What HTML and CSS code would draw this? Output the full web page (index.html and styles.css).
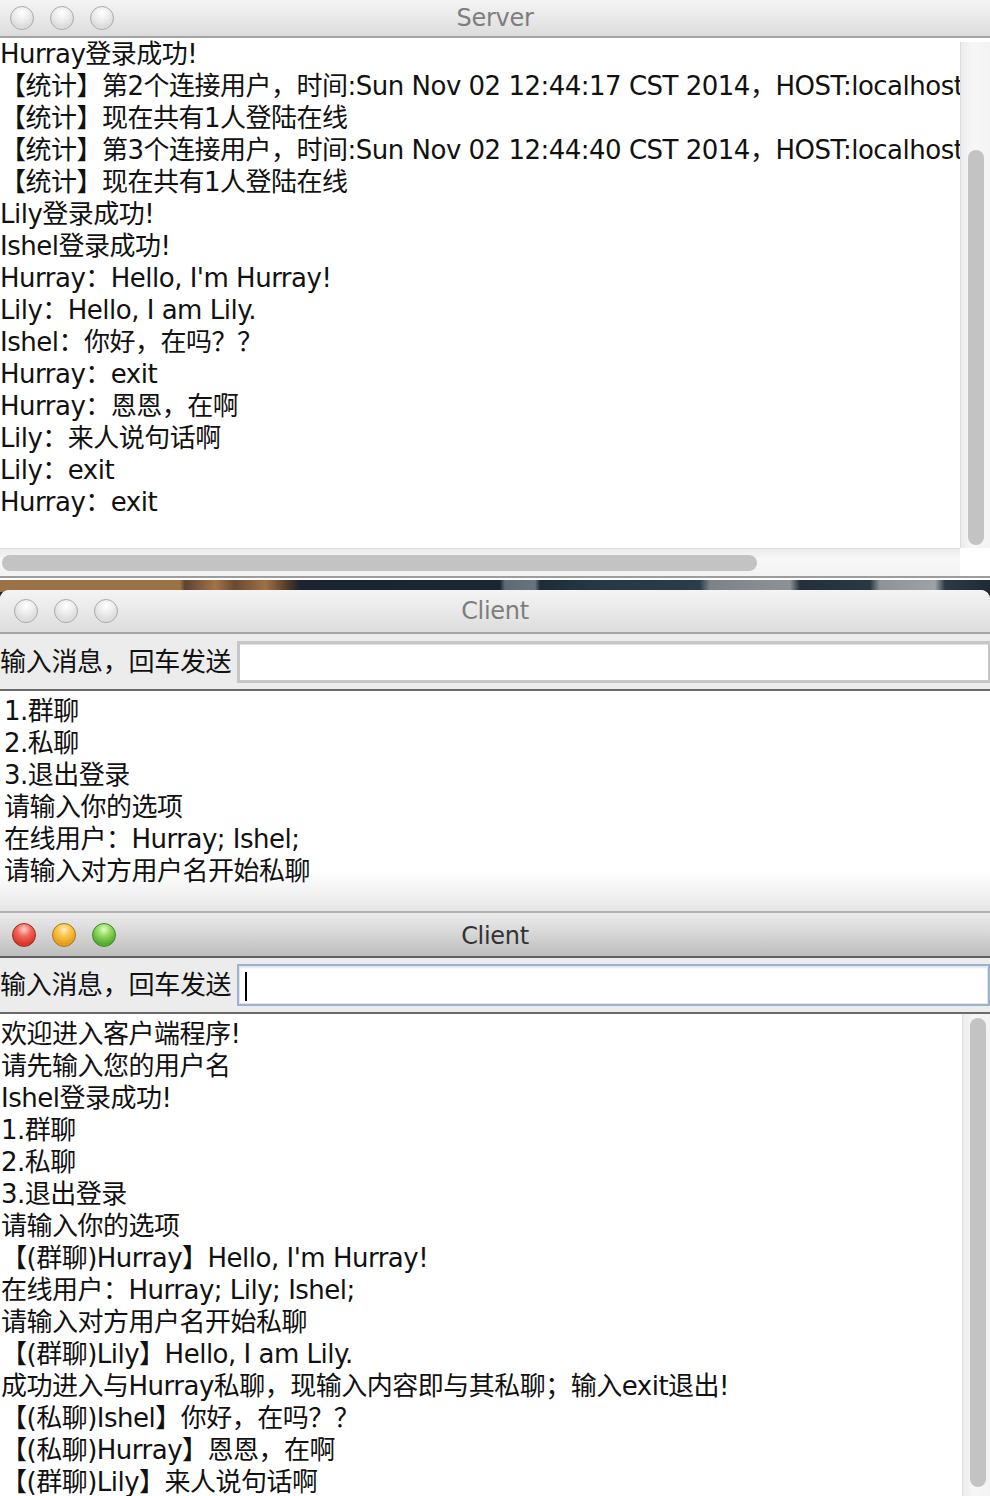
FILE: index.html
```html
<!DOCTYPE html>
<html>
<head>
<meta charset="utf-8">
<title>Server / Client</title>
<link rel="stylesheet" href="styles.css">
</head>
<body>
<div class="win win-server">
  <div class="titlebar inactive">
    <div class="lights lights-server">
      <span class="light"></span><span class="light"></span><span class="light"></span>
    </div>
    <div class="title">Server</div>
    <div></div>
  </div>
  <div class="server-main">
    <div class="log log-server">Hurray登录成功!
【统计】第2个连接用户，时间:Sun Nov 02 12:44:17 CST 2014，HOST:localhost
【统计】现在共有1人登陆在线
【统计】第3个连接用户，时间:Sun Nov 02 12:44:40 CST 2014，HOST:localhost
【统计】现在共有1人登陆在线
Lily登录成功!
Ishel登录成功!
Hurray：Hello, I'm Hurray!
Lily：Hello, I am Lily.
Ishel：你好，在吗？？
Hurray：exit
Hurray：恩恩，在啊
Lily：来人说句话啊
Lily：exit
Hurray：exit</div>
    <div class="vtrack vtrack-server"><div class="vthumb"></div></div>
  </div>
  <div class="hbar">
    <div class="htrack"><div class="hthumb"></div></div>
    <div class="corner"></div>
  </div>
</div>
<div class="desktop">
  <div class="win win-client1">
    <div class="titlebar inactive tall">
      <div class="lights lights-c1">
        <span class="light"></span><span class="light"></span><span class="light"></span>
      </div>
      <div class="title">Client</div>
      <div></div>
    </div>
    <div class="inputrow">
      <span class="label">输入消息，回车发送</span>
      <div class="field"></div>
    </div>
    <div class="log log-c1">1.群聊
2.私聊
3.退出登录
请输入你的选项
在线用户：Hurray; Ishel;
请输入对方用户名开始私聊</div>
  </div>
  <div class="win win-client2">
    <div class="titlebar active">
      <div class="lights lights-c2">
        <span class="light red"></span><span class="light yellow"></span><span class="light green"></span>
      </div>
      <div class="title">Client</div>
      <div></div>
    </div>
    <div class="inputrow inputrow-active">
      <span class="label">输入消息，回车发送</span>
      <div class="field focused"><span class="caret"></span></div>
    </div>
    <div class="client2-main">
      <div class="log log-c2">欢迎进入客户端程序!
请先输入您的用户名
Ishel登录成功!
1.群聊
2.私聊
3.退出登录
请输入你的选项
【(群聊)Hurray】Hello, I'm Hurray!
在线用户：Hurray; Lily; Ishel;
请输入对方用户名开始私聊
【(群聊)Lily】Hello, I am Lily.
成功进入与Hurray私聊，现输入内容即与其私聊；输入exit退出!
【(私聊)Ishel】你好，在吗？？
【(私聊)Hurray】恩恩，在啊
【(群聊)Lily】来人说句话啊</div>
      <div class="vtrack vtrack-c2"><div class="vthumb"></div></div>
    </div>
  </div>
</div>
</body>
</html>
```

FILE: styles.css
```css
html, body {
  margin: 0;
  padding: 0;
}
body {
  width: 990px;
  height: 1496px;
  overflow: hidden;
  background: #ffffff;
  font-family: "DejaVu Sans", "Noto Sans CJK SC", sans-serif;
  font-size: 26px;
  color: #111111;
}

/* ---------- window chrome ---------- */
.titlebar {
  display: grid;
  grid-template-columns: 1fr auto 1fr;
  align-items: center;
  box-sizing: border-box;
}
.titlebar.inactive {
  height: 38px;
  background: linear-gradient(#f4f4f4, #e9e9e9 50%, #dcdcdc);
  border-bottom: 2px solid #a4a4a4;
}
.titlebar.inactive.tall {
  height: 44px;
}
.titlebar.active {
  height: 46px;
  background: linear-gradient(#ececec, #dadada 40%, #bdbdbd);
  border-top: 1px solid #b2b2b2;
  border-bottom: 2px solid #5f5f5f;
}
.title {
  font-size: 24px;
  color: #7e7e7e;
  line-height: 1;
  letter-spacing: -0.3px;
}
.titlebar.active .title {
  color: #333333;
  padding-top: 3px;
}
.lights {
  display: flex;
  gap: 16px;
}
.lights-server { padding-left: 10px; }
.lights-c1 { padding-left: 14px; }
.lights-c2 { padding-left: 12px; }
.light {
  width: 24px;
  height: 24px;
  box-sizing: border-box;
  border-radius: 50%;
  border: 1px solid #a9a9a9;
  background: radial-gradient(circle at 50% 28%, #ffffff 0, #f1f1f1 30%, #dcdcdc 70%, #e9e9e9 100%);
}
.light.red {
  border-color: #9c2a22;
  background: radial-gradient(circle at 50% 25%, #ffd0c8 0, #f2675c 35%, #d8342a 75%, #f06a50 100%);
}
.light.yellow {
  border-color: #a8781a;
  background: radial-gradient(circle at 50% 25%, #fff0b8 0, #f9c44a 35%, #e59a18 75%, #f7c650 100%);
}
.light.green {
  border-color: #3e8a28;
  background: radial-gradient(circle at 50% 25%, #e0ffc8 0, #8fd85c 35%, #4eaa2e 75%, #9ade6a 100%);
}

/* ---------- text areas ---------- */
.log {
  white-space: pre;
  overflow: hidden;
  line-height: 32px;
  letter-spacing: -0.5px;
  background: #ffffff;
}

/* ---------- server ---------- */
.server-main {
  display: grid;
  grid-template-columns: 1fr 30px;
  height: 510px;
}
.log-server {
  padding-top: 0;
}
.vtrack {
  box-sizing: border-box;
  background: linear-gradient(to right, #ececec, #f7f7f7 40%, #f3f3f3);
  border-left: 1px solid #dddddd;
}
.vthumb {
  width: 16px;
  height: 100%;
  border-radius: 8px;
  background: #c3c3c3;
}
.vtrack-server {
  margin-top: 4px;
  padding: 108px 0 3px 7px;
}
.hbar {
  display: grid;
  grid-template-columns: 1fr 30px;
  height: 30px;
  box-sizing: border-box;
  border-bottom: 2px solid #9c9c9c;
}
.htrack {
  background: linear-gradient(#ececec, #f7f7f7 40%, #f3f3f3);
  border-top: 1px solid #dddddd;
  padding: 6px 0 0 2px;
}
.hthumb {
  width: 755px;
  height: 16px;
  border-radius: 8px;
  background: #c3c3c3;
}
.corner {
  background: #ffffff;
}
.win-server {
  margin-bottom: 2px;
}

/* ---------- desktop strip ---------- */
.desktop {
  padding-top: 10px;
  background:
    linear-gradient(to right,
      #9a7245 0, #9a7245 180px,
      #5c4232 185px, #a27448 215px, #6a4a34 235px, #a07044 265px, #4a3428 290px,
      #1b2430 300px, #1a2733 500px,
      #5f6a75 505px, #6a737d 535px,
      #1f2c38 540px, #263846 600px, #2b3d4b 700px,
      #7b8288 710px, #8d9296 790px,
      #24313d 800px, #2a3844 870px,
      #8e9398 880px, #9da2a6 935px,
      #2c3a46 945px, #1f2a35 990px) top / 100% 12px no-repeat,
    #1f2a35;
}

/* ---------- client windows ---------- */
.win-client1 {
  border-radius: 9px 9px 0 0;
  overflow: hidden;
  background: #ececec;
}
.inputrow {
  display: flex;
  align-items: center;
  height: 57px;
  box-sizing: border-box;
  background: #ececec;
  border-bottom: 2px solid #6b6b6b;
}
.label {
  white-space: nowrap;
  color: #111111;
  line-height: 1;
  letter-spacing: -0.3px;
}
.field {
  flex: 1;
  height: 42px;
  margin-left: 6px;
  box-sizing: border-box;
  background: #ffffff;
  border: 3px solid #c6c6c6;
  border-right-width: 2px;
  box-shadow: inset 0 1px 0 #e2e2e2;
  position: relative;
}
.field.focused {
  border: 2px solid #9cb3cd;
  box-shadow: inset 0 0 0 1px #dde6ef, inset 0 2px 2px #e8e8e8;
}
.caret {
  position: absolute;
  left: 6px;
  top: 6px;
  width: 2px;
  height: 29px;
  background: #000000;
}
.log-c1 {
  height: 221px;
  box-sizing: border-box;
  padding: 4px 0 0 4px;
  background: linear-gradient(#ffffff 0, #ffffff 180px, #eeeeee 208px, #e4e4e4 221px);
  border-bottom: 1px solid #b3b3b3;
}
.inputrow-active {
  height: 56px;
}
.client2-main {
  display: grid;
  grid-template-columns: 1fr 28px;
  height: 600px;
}
.log-c2 {
  padding: 4px 0 0 1px;
}
.vtrack-c2 {
  padding: 4px 0 0 7px;
  background: linear-gradient(to right, #ececec, #f7f7f7 40%, #f3f3f3);
}
.vtrack-c2 .vthumb {
  height: 469px;
}
```
